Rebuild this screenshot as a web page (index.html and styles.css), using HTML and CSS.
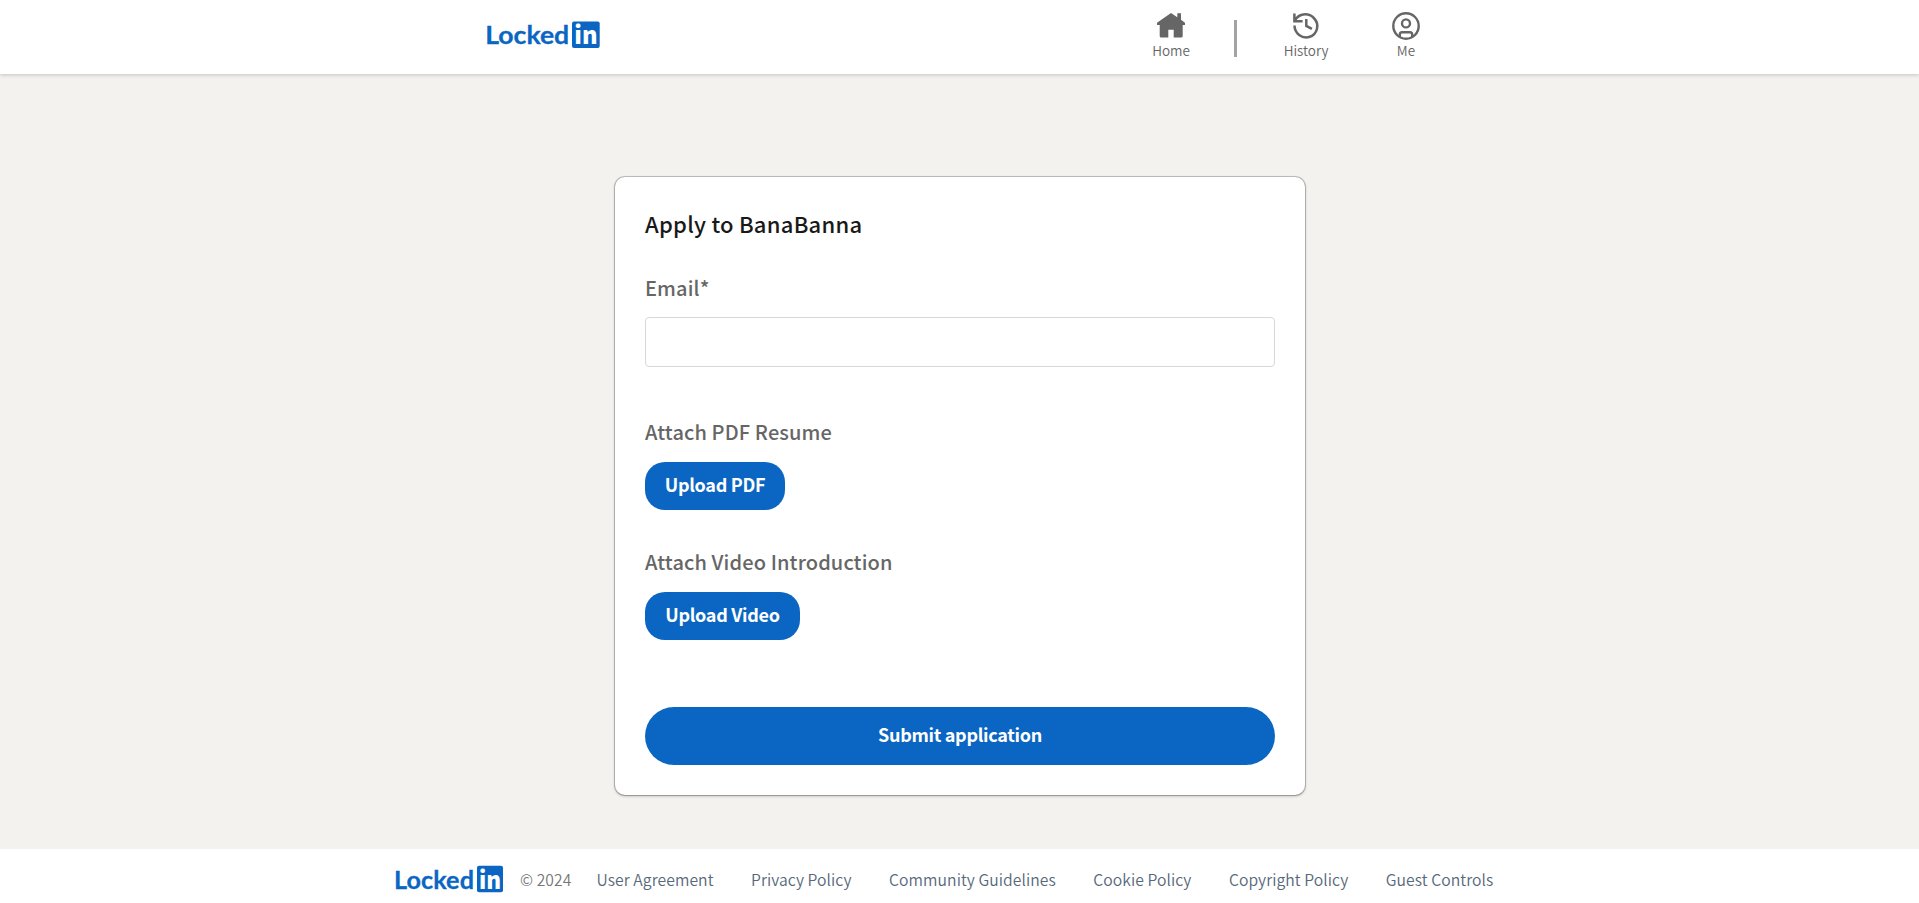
FILE: index.html
```html
<!DOCTYPE html>
<html lang="en">
<head>
<meta charset="utf-8">
<title>Apply to BanaBanna</title>
<link rel="stylesheet" href="styles.css">
</head>
<body>
<header class="header">
  <svg class="logo" width="116" height="30" viewBox="0 0 116 30">
    <text class="logo-word" x="-0.8" y="24" textLength="84" lengthAdjust="spacingAndGlyphs">Locked</text>
    <rect class="logo-box" x="86" y="1.5" width="27.7" height="26.6" rx="2"/>
    <text class="logo-in" x="88.3" y="24" textLength="23.2" lengthAdjust="spacingAndGlyphs">in</text>
  </svg>
  <nav class="nav">
    <a class="nav-item">
      <svg width="30" height="30" viewBox="0 0 30 30"><path fill="#666" d="M15 3 21.3 7.200V3.300H25V9.800L29 12.700V15H26.7V26Q26.7 27.500 25.2 27.500H17.7V19.800H12.3V27.500H5.2Q3.7 27.500 3.7 26V15H1V12.700Z"/></svg>
      <span>Home</span>
    </a>
    <i class="divider"></i>
    <a class="nav-item">
      <svg width="30" height="30" viewBox="0 0 30 30" fill="none" stroke="#666" stroke-width="2.5"><path d="M3.400 3.600V11.200H11.600M3.700 11C7 3.800 16.800 2 22.800 8C29 14.300 26.500 24.800 18.200 27C10.800 28.800 3.600 23.500 3.500 15.600"/><path d="M15.300 9V15.900L20.900 18.800"/></svg>
      <span>History</span>
    </a>
    <a class="nav-item">
      <svg width="30" height="30" viewBox="0 0 30 30" fill="none" stroke="#666" stroke-width="2.4"><circle cx="15" cy="16" r="12.700"/><circle cx="15" cy="13.400" r="4"/><path d="M8.800 27V24.600Q8.800 22.300 11.100 22.300H18.900Q21.200 22.300 21.200 24.600V27"/></svg>
      <span>Me</span>
    </a>
  </nav>
</header>
<main class="main">
  <form class="card">
    <h1 class="title">Apply to BanaBanna</h1>
    <label class="label" for="email">Email*</label>
    <input class="input" id="email" type="email">
    <div class="label label-pdf">Attach PDF Resume</div>
    <button class="btn btn-pdf" type="button">Upload PDF</button>
    <div class="label label-video">Attach Video Introduction</div>
    <button class="btn btn-video" type="button">Upload Video</button>
    <button class="btn submit" type="button">Submit application</button>
  </form>
</main>
<footer class="footer">
  <svg class="logo" width="110" height="30" viewBox="0 0 110 30">
    <text class="logo-word" x="-1" y="24.500" textLength="80" lengthAdjust="spacingAndGlyphs">Locked</text>
    <rect class="logo-box" x="82" y="1.700" width="26" height="26.600" rx="2"/>
    <text class="logo-in" x="84" y="24.500" textLength="22.200" lengthAdjust="spacingAndGlyphs">in</text>
  </svg>
  <span class="copy">© 2024</span>
  <div class="links">
    <a>User Agreement</a><a>Privacy Policy</a><a>Community Guidelines</a><a>Cookie Policy</a><a>Copyright Policy</a><a>Guest Controls</a>
  </div>
</footer>
</body>
</html>
```
FILE: styles.css
```css
* { box-sizing: border-box; }
body {
  margin: 0;
  height: 903px;
  display: flex;
  flex-direction: column;
  background: #f3f2ee;
  font-family: "Noto Sans CJK SC", "Noto Sans", sans-serif;
}
.header {
  height: 74px;
  padding-left: 486px;
  display: flex;
  background: #fff;
  box-shadow: 0 1px 4px rgba(0, 0, 0, .2);
}
.logo { display: block; margin-top: 20px; overflow: visible; }
.logo-word { font: 700 24.500px Lato, sans-serif; fill: #0a66c2; stroke: #0a66c2; stroke-width: .3px; }
.logo-box { fill: #0a66c2; }
.logo-in { font: 900 24.500px "Noto Sans CJK SC", sans-serif; fill: #fff; }
.nav { display: flex; margin-left: 519px; padding-top: 10px; }
.nav-item {
  width: 100px;
  display: flex;
  flex-direction: column;
  align-items: center;
  font-size: 13.500px;
  font-weight: 350;
  line-height: 21px;
  color: #666;
}
.nav-item svg { display: block; }
.divider { width: 3px; height: 37px; margin: 10px 19px 0 13px; background: #a3a3a3; }
.main { flex: 1; padding-top: 103px; }
.card {
  width: 690px;
  height: 618px;
  margin: 0 auto 0 615px;
  padding: 29px 30px 30px;
  display: flex;
  flex-direction: column;
  align-items: flex-start;
  background: #fff;
  border-radius: 10px;
  box-shadow: 0 0 0 1px rgba(0, 0, 0, .2), 0 1px 3px rgba(0, 0, 0, .3);
}
.title { margin: 0 0 34px; font-size: 22px; line-height: 34px; font-weight: 500; letter-spacing: .25px; color: #191919; }
.label { font-size: 20px; line-height: 28px; font-weight: 500; letter-spacing: .12px; color: #666; }
.input { width: 630px; height: 50px; margin-top: 15px; border: 1px solid #d8d8d8; border-radius: 4px; background: #fff; }
.label-pdf { margin-top: 51px; }
.label-video { margin-top: 38px; }
.btn {
  height: 48px;
  margin-top: 16px;
  padding: 0 0 3px;
  border: 0;
  border-radius: 20px;
  background: #0a66c2;
  color: #fff;
  font: 700 18px/45px "Noto Sans CJK SC", sans-serif;
  letter-spacing: -.29px;
}
.btn-pdf { width: 140px; }
.btn-video { width: 155px; }
.submit { width: 630px; height: 58px; margin-top: 67px; border-radius: 29px; line-height: 55px; }
.footer {
  height: 54px;
  padding-left: 395px;
  display: flex;
  background: #fff;
  font-size: 15.700px;
  font-weight: 350;
  letter-spacing: .07px;
  line-height: 61px;
  color: #56687a;
}
.footer .logo { margin-top: 15px; }
.copy { width: 76.500px; margin-left: 15px; color: #777; }
.links { display: flex; gap: 37.500px; white-space: nowrap; }
```
